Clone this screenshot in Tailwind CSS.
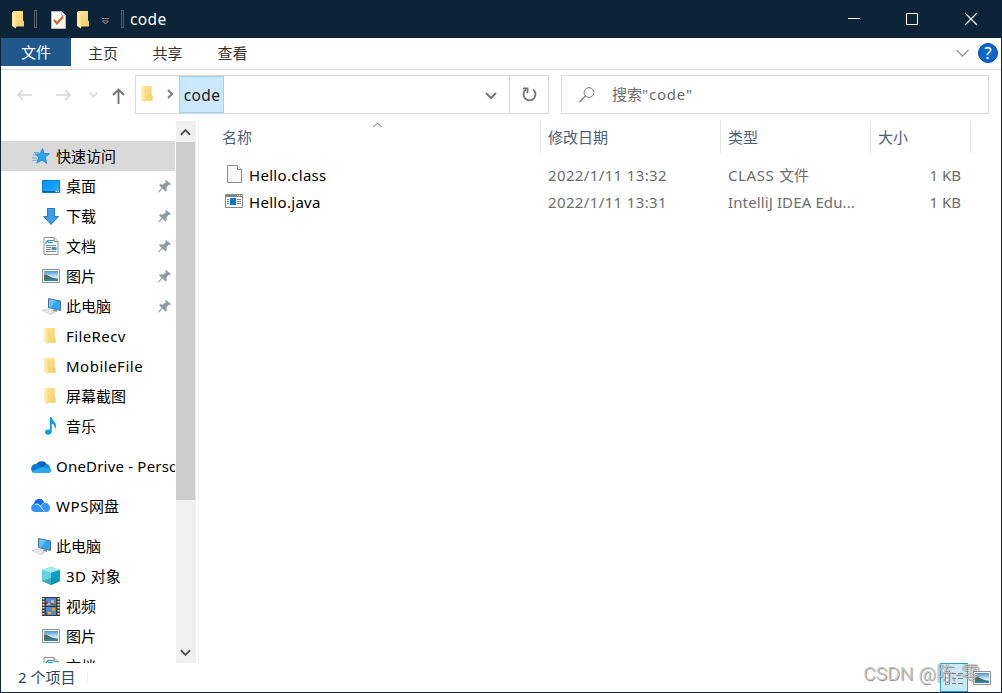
<!DOCTYPE html>
<html lang="zh-CN">

<head>
    <meta charset="UTF-8" />
    <meta name="viewport" content="width=device-width, initial-scale=1.0" />
    <title>code</title>
    <script src="https://cdn.jsdelivr.net/npm/@tailwindcss/browser@4"></script>
</head>

<body class="h-[693px] w-[1002px] overflow-hidden bg-white font-['Noto_Sans','Noto_Sans_CJK_SC',sans-serif] text-[15px] leading-[20px] text-black">

    <!-- Icons -->
    <svg class="absolute size-0">
        <defs>
            <linearGradient id="gold" x1="0" x2="1" y2="1">
                <stop offset="0" stop-color="#ffe697" />
                <stop offset="1" stop-color="#f3cd67" />
            </linearGradient>
            <linearGradient id="sky" x1="0" x2="1" y2="1">
                <stop offset="0" stop-color="#0a93f0" />
                <stop offset=".55" stop-color="#159ffc" />
                <stop offset="1" stop-color="#3cb4ff" />
            </linearGradient>
            <linearGradient id="photo" x1="0" x2="0" y1="0" y2="1">
                <stop offset="0" stop-color="#4d92dc" />
                <stop offset=".6" stop-color="#d4ecf8" />
                <stop offset="1" stop-color="#a8cbd9" />
            </linearGradient>
        </defs>
        <symbol id="folder" viewBox="0 0 12 18">
            <path d="M1 0h10v9.500l1 1V15.500H3z" fill="url(#gold)" />
            <path d="M0 .5 4 2.500V17.500L0 15z" fill="#ffe9a2" />
            <path d="M3.500 2.500V17l1-1.500V2.500z" fill="#f6d67b" />
        </symbol>
        <symbol id="star" viewBox="0 0 18 16">
            <path d="m10.500.5 1.500 5 5.500.2-4.300 3.400 1.500 6.200-4.700-3.200-5.200 3 2-5.600L3.200 6l5-.2z" fill="#2ba5ee" stroke="#147fc8" stroke-width=".8" />
            <path d="M2 4.500h5M1 7h4M0 10h5M.5 12.500h4" stroke="#65b5e8" stroke-width="1" />
        </symbol>
        <symbol id="desktop" viewBox="0 0 18 13">
            <path d="M.5.5h17v12H.5z" fill="url(#sky)" stroke="#0878c8" />
            <path d="M1 11.500h12" stroke="#075c9c" />
            <path d="M14 11.500h1M16 11.500h1" stroke="#fff" />
        </symbol>
        <symbol id="down" viewBox="0 0 17 17">
            <path d="M5 .5h7v8h4l-7.500 8-7.500-8h4z" fill="#3f9ae8" stroke="#2479c6" />
        </symbol>
        <symbol id="doc" viewBox="0 0 15 18">
            <path d="M.5.500h10l4 4v13H.5z" fill="#fff" stroke="#8c8f91" />
            <path d="M10.500.5v4h4" fill="#ddd" stroke="#8c8f91" />
            <path d="M2 6.500 5 3M5 3.500h5M4.500 5.500h5" stroke="#1a91d5" stroke-width="1.200" />
            <path d="M2.500 8.500h10M2.500 10.500h5M2.500 12.500h5M2.500 14.500h10" stroke="#7d8990" />
            <path d="M8 10h5v3H8z" fill="#398fce" />
        </symbol>
        <symbol id="picture" viewBox="0 0 18 14">
            <path d="M.5.5h17v13H.5z" fill="#fff" stroke="#929292" />
            <path d="M2 2h14v10H2z" fill="url(#photo)" />
            <path d="M2 5.500c3 0 5 1.500 7 2.500s4 1.500 7 2v1H2z" fill="#486f59" />
            <path d="M2 10c5-.5 9-.5 14 0v2H2z" fill="#3682a3" />
        </symbol>
        <symbol id="pc" viewBox="0 0 19 17">
            <path d="m6.500.5 12 2.500v9.500l-12-3z" fill="#2ea7f5" stroke="#49718e" />
            <path d="m7 1 7 1.500L9 9.500 7 9z" fill="#69c1f8" />
            <path d="m12 11 3 1v2l-4-1z" fill="#7f929f" />
            <path d="m0 12.500 5-1.500 8 3-4 2.500z" fill="#d8dde0" stroke="#b9c0c4" stroke-width=".6" />
            <path d="m2 13 7 2M4 12l7 2" stroke="#fff" stroke-width=".6" />
        </symbol>
        <symbol id="music" viewBox="0 0 12 18">
            <path d="M5 0h1.500c.5 4 5.500 5 4.500 10-.5 2-1 2-1 2C10 8 8 7 6.800 7v7c0 5-6.800 4.500-6.800 1.200 0-2.500 3-3.200 5-2.200z" fill="#0b9be9" />
        </symbol>
        <symbol id="onedrive" viewBox="0 0 20 13">
            <path d="M5 5a6 6 0 0 1 11-.5L11 9z" fill="#0863b5" />
            <path d="M4.500 4C-.5 4.500-1.500 11 3 13l10-5-5-3.500Q6 3.500 4.500 4" fill="#0e79d4" />
            <path d="M11 7.500 15.500 4c2 0 3 1.500 3.200 3L20 10l-5 1z" fill="#1490df" />
            <path d="M3 13c-1-.4-2-1-2-2l10-4 8 2c2 1.500 1 4-2 4z" fill="#29a9eb" />
        </symbol>
        <symbol id="wps" viewBox="0 0 19 14">
            <path d="M3 5C3.500-1 12-2 13 4c4-1 6 3 6 5s-1 4-4 4H4C-1 13-1 6 3 5" fill="#3592ff" />
            <path d="M3 5C3.500-1 12-2 13 4c-2 0-3 1-3.500 2L8 4.500C6.500 3.500 5 4 3 5" fill="#1265e8" />
            <path d="M4.500 5.500c2-1 3.500 0 4.500 1.500l4.500 5.500" fill="none" stroke="#e4f3ff" />
            <path d="M10 7c.5-1.500 1.500-2.500 3-3" fill="none" stroke="#b9dcff" stroke-width=".8" />
        </symbol>
        <symbol id="cube" viewBox="0 0 18 18">
            <path d="m0 3 9-3 9 3v11l-9 4-9-4z" fill="#25b6d0" />
            <path d="m0 3 9-3 9 3-9 3z" fill="#a1eaf1" />
            <path d="m0 3 9 3v12l-9-4z" fill="#64d3df" />
            <path d="m9 6 9-3v11l-9 4z" fill="#0b9fc5" />
            <path d="m0 14 9-3 9 3-9 4z" fill="#087b9b" fill-opacity=".45" />
        </symbol>
        <symbol id="video" viewBox="0 0 18 19">
            <path d="M0 0h18v19H0z" fill="#3c3938" />
            <path d="M4 1h10v8H4zM4 10h10v8H4z" fill="#5286e0" />
            <path d="M9 3h3v3H9zM5 6h3v2H5zM6 15h3v2H6z" fill="#e6bd32" />
            <path d="M10 11h3v3h-3z" fill="#d3a51e" />
            <path d="M9 6h2v2H9zM4 5h2v2H4z" fill="#bb352b" />
            <path d="M11 7h3v2h-3zM4 16h2v2H4z" fill="#2d8c43" />
            <path d="M1.500 1v18M16.500 1v18" stroke="#ececec" stroke-width="2" stroke-dasharray="1.500 1.500" />
        </symbol>
        <symbol id="pin" viewBox="0 0 13 13">
            <path d="m8 0 5 4-1 1-1.500-.3-2 2.800.2 3-1.200 1-3-3L.5 12.800 0 12l3.600-4.300L1 5.200l1-1 3.200.2L8 2.200 7.200 1z" fill="#8e9ba5" />
        </symbol>
        <symbol id="chevron" viewBox="0 0 12 8">
            <path d="m1 1 5 5 5-5" fill="none" stroke="currentColor" stroke-width="2" />
        </symbol>
    </svg>

    <div class="flex h-full flex-col border-x border-b border-[#0d2438]">

        <!-- Title bar -->
        <header class="flex h-[38px] shrink-0 items-center bg-[#0d2438] pl-[11px] text-white">
            <svg class="mt-px h-[18px] w-3"><use href="#folder" /></svg>
            <span class="ml-[10px] h-[18px] w-[3px] border border-[#53616e]"></span>
            <svg class="ml-[14px] mt-px h-[18px] w-[15px]" viewBox="0 0 15 18">
                <path d="M.5.5h10l4 4v13H.5z" fill="#f7f7f7" stroke="#b8b8b8" />
                <path d="M10.500.5v4h4" fill="none" stroke="#b8b8b8" />
                <path d="m3 9 3 3.500 6-7" fill="none" stroke="#e85d22" stroke-width="2" />
            </svg>
            <svg class="ml-[11px] mt-px h-[18px] w-3"><use href="#folder" /></svg>
            <svg class="ml-[13px] mt-1 h-2 w-[7px]" viewBox="0 0 7 8">
                <path d="M0 .5h7" stroke="#000" />
                <path d="M0 1.500h7" stroke="#aab2b9" stroke-width=".8" />
                <path d="m.5 4 3 3 3-3z" fill="#000" stroke="#aab2b9" stroke-width=".8" />
            </svg>
            <span class="ml-3 h-[18px] w-[3px] border border-[#53616e]"></span>
            <span class="ml-[6px] text-[15.500px] tracking-[.4px]">code</span>
            <div class="ml-auto flex">
                <svg class="h-[38px] w-[58px]" viewBox="0 0 58 38"><path d="M23 18.500h12" stroke="#fff" /></svg>
                <svg class="h-[38px] w-[58px]" viewBox="0 0 58 38"><path d="M23.500 13.500h11v11h-11z" fill="none" stroke="#fff" /></svg>
                <svg class="h-[38px] w-[60px]" viewBox="0 0 60 38"><path d="m24 13 12 12m0-12L24 25" stroke="#fff" stroke-width="1.200" /></svg>
            </div>
        </header>

        <!-- Ribbon tabs -->
        <nav class="flex h-8 shrink-0 border-b border-[#dadbdc] text-[#333]">
            <div class="flex h-7 w-[70px] items-center justify-center bg-[#20588c] text-white">文件</div>
            <div class="flex h-[29px] w-[64px] items-center justify-center">主页</div>
            <div class="flex h-[29px] w-[65px] items-center justify-center">共享</div>
            <div class="flex h-[29px] w-[65px] items-center justify-center">查看</div>
            <svg class="ml-auto mt-[11px] h-2 w-[13px] text-[#999]" viewBox="0 0 13 8"><path d="m.5 1 6 6 6-6" fill="none" stroke="currentColor" stroke-width="1.300" /></svg>
            <div class="ml-[9px] mr-[3px] mt-[5px] flex size-5 items-center justify-center rounded-full border border-[#074d91] bg-[#0768cc] text-[16px] font-medium text-white">?</div>
        </nav>

        <!-- Address bar -->
        <div class="flex h-[50px] shrink-0 pt-[5px]">
            <div class="flex w-[134px] pt-[14px] text-[#d5d5d5]">
                <svg class="ml-4 h-3 w-[15px]" viewBox="0 0 15 12"><path d="M15 6H1m5-5L1 6l5 5" fill="none" stroke="currentColor" stroke-width="1.600" /></svg>
                <svg class="ml-6 h-3 w-[15px]" viewBox="0 0 15 12"><path d="M0 6h14M9 1l5 5-5 5" fill="none" stroke="currentColor" stroke-width="1.600" /></svg>
                <svg class="ml-[18px] mt-[3px] h-[6px] w-[9px]"><use href="#chevron" /></svg>
                <svg class="ml-[14px] -mt-px h-4 w-[13px] text-[#777]" viewBox="0 0 13 16"><path d="M6.500 16V2M1 7l5.500-5.500L12 7" fill="none" stroke="currentColor" stroke-width="1.900" /></svg>
            </div>
            <div class="flex h-[39px] w-[414px] border border-[#d9d9d9]">
                <svg class="ml-[5px] mt-[10px] h-[17px] w-3"><use href="#folder" /></svg>
                <svg class="ml-[14px] mt-[13px] h-[10px] w-[6px]" viewBox="0 0 6 10"><path d="m1 1 4 4-4 4" fill="none" stroke="#777" stroke-width="1.800" /></svg>
                <div class="ml-[6px] flex w-[45px] items-center justify-center border border-[#99d1ff] bg-[#cce8ff] pl-px text-[15.500px] tracking-[.4px] text-[#222]">code</div>
                <svg class="ml-auto mr-3 mt-4 h-2 w-3 text-[#777]"><use href="#chevron" /></svg>
                <div class="flex w-[39px] items-center justify-center border-l border-[#d9d9d9] pl-px">
                    <!-- refresh -->
                    <svg class="h-[15px] w-[15px]" viewBox="0 0 15 15">
                        <path d="M4 2.500a6 6 0 1 0 7 0" fill="none" stroke="#777" stroke-width="1.900" />
                        <path d="M1 1.500h4.500V6" fill="none" stroke="#777" stroke-width="1.800" />
                    </svg>
                </div>
            </div>
            <div class="ml-3 flex h-[39px] w-[428px] items-center border border-[#d9d9d9] text-[#6d6d6d]">
                <svg class="ml-[17px] h-4 w-4" viewBox="0 0 16 16"><circle cx="10" cy="5.500" r="4.900" fill="none" stroke="#777" /><path d="M6.500 9 .5 15" stroke="#777" stroke-width="1.200" /></svg>
                <span class="ml-[17px] pb-[2px]">搜索<span class="tracking-[.8px]">"code"</span></span>
            </div>
        </div>

        <main class="flex h-[543px] shrink-0">

            <!-- Navigation pane -->
            <aside class="h-full w-[175px] overflow-hidden whitespace-nowrap pt-[21px]">
                <div class="flex h-[30px] w-[174px] items-center bg-[#d9d9d9] pl-[31px]"><svg class="h-4 w-[18px]"><use href="#star" /></svg><span class="ml-[6px]">快速访问</span></div>
                <div class="flex h-[30px] items-center pl-[41px] pr-[5px]"><svg class="h-[13px] w-[18px]"><use href="#desktop" /></svg><span class="ml-[6px]">桌面</span><svg class="ml-auto size-[13px]"><use href="#pin" /></svg></div>
                <div class="flex h-[30px] items-center pl-[41px] pr-[5px]"><svg class="h-[17px] w-[18px]"><use href="#down" /></svg><span class="ml-[6px]">下载</span><svg class="ml-auto size-[13px]"><use href="#pin" /></svg></div>
                <div class="flex h-[30px] items-center pl-[41px] pr-[5px]"><svg class="h-[18px] w-[18px]"><use href="#doc" /></svg><span class="ml-[6px]">文档</span><svg class="ml-auto size-[13px]"><use href="#pin" /></svg></div>
                <div class="flex h-[30px] items-center pl-[41px] pr-[5px]"><svg class="h-[14px] w-[18px]"><use href="#picture" /></svg><span class="ml-[6px]">图片</span><svg class="ml-auto size-[13px]"><use href="#pin" /></svg></div>
                <div class="flex h-[30px] items-center pl-[41px] pr-[5px]"><svg class="h-[17px] w-[19px]"><use href="#pc" /></svg><span class="ml-[5px]">此电脑</span><svg class="ml-auto size-[13px]"><use href="#pin" /></svg></div>
                <div class="flex h-[30px] items-center pl-[43px]"><svg class="h-[17px] w-3"><use href="#folder" /></svg><span class="ml-[10px] tracking-[.4px]">FileRecv</span></div>
                <div class="flex h-[30px] items-center pl-[43px]"><svg class="h-[17px] w-3"><use href="#folder" /></svg><span class="ml-[10px] tracking-[.5px]">MobileFile</span></div>
                <div class="flex h-[30px] items-center pl-[43px]"><svg class="h-[17px] w-3"><use href="#folder" /></svg><span class="ml-[10px]">屏幕截图</span></div>
                <div class="flex h-[30px] items-center pl-11"><svg class="h-[18px] w-3"><use href="#music" /></svg><span class="ml-[9px]">音乐</span></div>
                <div class="mt-[10px] flex h-[30px] w-[174px] items-center overflow-hidden pl-[30px]"><svg class="h-[13px] w-5 shrink-0"><use href="#onedrive" /></svg><span class="ml-[5px] tracking-[.2px]">OneDrive - Personal</span></div>
                <div class="mt-[10px] flex h-[30px] items-center pl-[30px]"><svg class="h-[14px] w-[19px]"><use href="#wps" /></svg><span class="ml-[6px]"><span class="tracking-[.6px]">WPS</span>网盘</span></div>
                <div class="mt-[10px] flex h-[30px] items-center pl-[31px]"><svg class="h-[17px] w-[19px]"><use href="#pc" /></svg><span class="ml-[5px]">此电脑</span></div>
                <div class="flex h-[30px] items-center pl-[41px]"><svg class="h-[18px] w-[18px]"><use href="#cube" /></svg><span class="ml-[6px]"><span class="tracking-[.4px]">3D </span>对象</span></div>
                <div class="flex h-[30px] items-center pl-[41px]"><svg class="h-[19px] w-[18px]"><use href="#video" /></svg><span class="ml-[6px]">视频</span></div>
                <div class="flex h-[30px] items-center pl-[41px]"><svg class="h-[14px] w-[18px]"><use href="#picture" /></svg><span class="ml-[6px]">图片</span></div>
                <div class="flex h-[30px] items-center pl-[41px]"><svg class="h-[18px] w-[18px]"><use href="#doc" /></svg><span class="ml-[6px]">文档</span></div>
            </aside>

            <!-- Scrollbar -->
            <div class="mt-px flex w-5 flex-col bg-[#f0f0f0] text-[#505050]">
                <svg class="mb-[6px] ml-1 mt-[7px] h-2 w-[11px] rotate-180"><use href="#chevron" /></svg>
                <div class="h-[358px] w-[19px] bg-[#cdcdcd]"></div>
                <svg class="mb-[6px] ml-1 mt-auto h-2 w-[11px]"><use href="#chevron" /></svg>
            </div>

            <!-- File list -->
            <section class="ml-[2px] flex-1 border-l border-[#f3f3f3] text-[#6d6d6d]">
                <div class="relative mt-px flex h-8 items-center text-[#4c607a]">
                    <svg class="absolute left-[174px] top-px h-[6px] w-[9px]" viewBox="0 0 9 6"><path d="M.5 5 4.500 1l4 4" fill="none" stroke="#666" /></svg>
                    <div class="flex h-8 w-[342px] items-center border-r border-[#e5e5e5] pl-[23px]">名称</div>
                    <div class="flex h-8 w-[180px] items-center border-r border-[#e5e5e5] pl-[7px]">修改日期</div>
                    <div class="flex h-8 w-[150px] items-center border-r border-[#e5e5e5] pl-[7px]">类型</div>
                    <div class="flex h-8 w-[100px] items-center border-r border-[#e5e5e5] pl-[7px]">大小</div>
                </div>
                <div class="mt-[7px] flex h-[27px] items-center">
                    <svg class="ml-7 h-[18px] w-[15px]" viewBox="0 0 15 18"><path d="M.5.5h10l4 4v13H.5z" fill="#f8f8f8" stroke="#8c8c8c" /><path d="M10.500.5v4h4" fill="#fff" stroke="#8c8c8c" /></svg>
                    <span class="ml-[7px] w-[299px] pt-[2px] tracking-[.3px] text-black">Hello.class</span>
                    <span class="w-[180px] pt-[2px] tracking-[.37px]">2022/1/11 13:32</span>
                    <span class="w-[150px] pt-[2px]"><span class="tracking-[.6px]">CLASS </span>文件</span>
                    <span class="w-[83px] pt-[2px] text-right">1 KB</span>
                </div>
                <div class="flex h-[27px] items-center">
                    <svg class="ml-[26px] h-[14px] w-[18px]" viewBox="0 0 18 14">
                        <path d="M.5.5h17v13H.5z" fill="#fff" stroke="#858585" />
                        <path d="M1 2h16" stroke="#858585" stroke-width="2" />
                        <path d="M12 1.500h1m1 0h1m1 0h1" stroke="#fff" />
                        <path d="M5 4h6v7H5z" fill="#0877d1" />
                        <path d="M2 5.500h2m-2 2h2m-2 2h2m8-4h4m-4 2h4m-4 2h4" stroke="#888" />
                    </svg>
                    <span class="ml-[6px] w-[299px] pt-[2px] tracking-[.3px] text-black">Hello.java</span>
                    <span class="w-[180px] pt-[2px] tracking-[.37px]">2022/1/11 13:31</span>
                    <span class="w-[150px] pt-[2px] tracking-[.12px]">IntelliJ IDEA Edu...</span>
                    <span class="w-[83px] pt-[2px] text-right">1 KB</span>
                </div>
            </section>
        </main>

        <!-- Status bar -->
        <footer class="relative flex h-[29px] items-center pl-[17px] text-[#2c4566]">
            <span class="pb-[2px]">2 个项目</span>
            <span class="ml-3 h-3 w-px bg-[#f0f0f0]"></span>
            <div class="ml-auto flex h-[29px] w-7 items-center justify-center border border-[#26a0da] bg-[#cbe8f6]">
                <svg class="h-4 w-[18px]" viewBox="0 0 18 16"><path d="M.5 1.500h4v13h-4z" fill="#fff" stroke="#999" /><path d="M2 4h1m-1 4h1" stroke="#397db8" /><path d="M2 12h1" stroke="#c33" stroke-width="2" /><path d="M7 3.500h4m2 0h5m-11 5h4m2 0h5m-11 5h4m2 0h5" stroke="#777" /></svg>
            </div>
            <svg class="ml-[5px] mr-[10px] h-[14px] w-[18px]"><use href="#picture" /></svg>
            <div class="absolute bottom-[5px] right-[21px] whitespace-nowrap font-['Roboto','Noto_Sans_CJK_SC',sans-serif] text-[19px] font-light leading-[26px] tracking-[.2px] text-[#c4c4c4] [text-shadow:1px_1px_1px_#777]">CSDN @陈-零</div>
        </footer>
    </div>
</body>

</html>
